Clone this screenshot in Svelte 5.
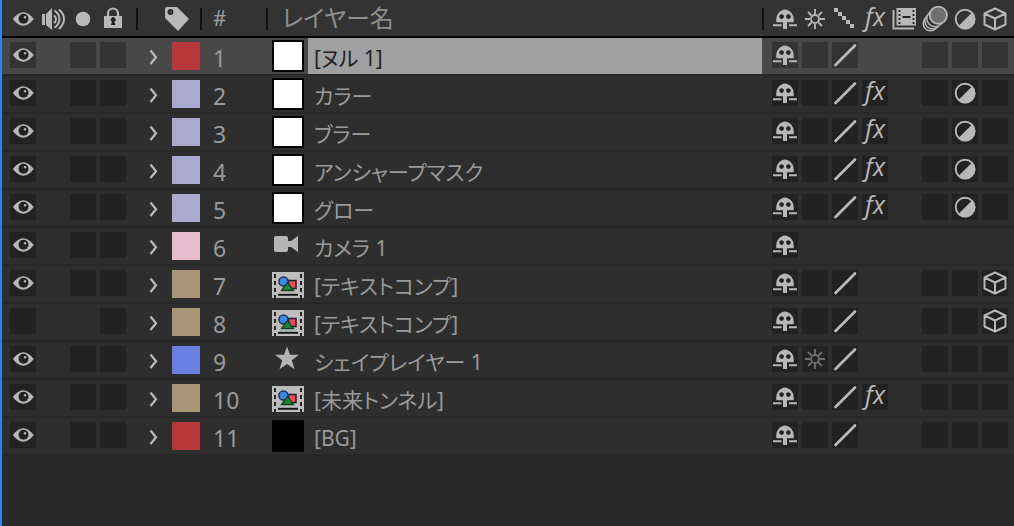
<script>
  const colors = {
    red: '#b83939',
    lavender: '#aaaacf',
    pink: '#e8bdcd',
    sand: '#a89678',
    blue: '#697fe2'
  };

  // av: e = video on, . = empty switch, - = no switch (video, audio, solo, lock)
  // sw: s shy, r / R rasterise off / on, q quality, f effects, a adjustment, c 3D
  const layers = $state([
    { name: '[ヌル 1]', kind: 'white', color: 'red', av: 'e-..', sw: 's.q--...' },
    { name: 'カラー', kind: 'white', color: 'lavender', av: 'e-..', sw: 's.qf-.a.' },
    { name: 'ブラー', kind: 'white', color: 'lavender', av: 'e-..', sw: 's.qf-.a.' },
    { name: 'アンシャープマスク', kind: 'white', color: 'lavender', av: 'e-..', sw: 's.qf-.a.' },
    { name: 'グロー', kind: 'white', color: 'lavender', av: 'e-..', sw: 's.qf-.a.' },
    { name: 'カメラ 1', kind: 'camera', color: 'pink', av: 'e-..', sw: 's-------' },
    { name: '[テキストコンプ]', kind: 'comp', color: 'sand', av: 'e-..', sw: 's.q--..c' },
    { name: '[テキストコンプ]', kind: 'comp', color: 'sand', av: '.--.', sw: 's.q--..c' },
    { name: 'シェイプレイヤー 1', kind: 'star', color: 'blue', av: 'e-..', sw: 'srq--...' },
    { name: '[未来トンネル]', kind: 'comp', color: 'sand', av: 'e-..', sw: 's.qf-...' },
    { name: '[BG]', kind: 'black', color: 'red', av: 'e-..', sw: 's.q--...' }
  ]);
  const avNames = ['ビデオ', 'オーディオ', 'ソロ', 'ロック'];
  const swNames = ['シャイ', 'コラップス', '画質', 'エフェクト', 'フレームブレンド', 'モーションブラー', '調整レイヤー', '3Dレイヤー'];
  const headSwitches = ['s', 'R', 'steps', 'f', 'film', 'blur', 'a', 'c'];
  let selected = $state(0);
</script>

{#snippet icon(name)}
  {#if name === 'f'}
    <span class="fx">fx</span>
  {:else}
    <svg class="icon" class:dim={name === 'r'} viewBox="0 0 26 26" aria-hidden="true">
      {#if name === 'e'}
        <path d="M2.800 13Q13.200-.5 23.800 13Q13.200 26.500 2.800 13Z" fill="currentColor" />
        <circle cx="13.500" cy="12.800" r="5" fill="#222" />
        <circle cx="15" cy="11.300" r="1.200" fill="currentColor" />
      {:else if name === 'speaker'}
        <path d="M2 8h3v11H2zM6 8l6-6v22l-6-5z" fill="currentColor" />
        <path d="M14 9.500Q18 13 14 17M14.500 4.500Q19.500 8 19.500 13T14.500 21.800M19 3.500Q24 8 24 13T19 23" fill="none" stroke="currentColor" stroke-width="2" />
      {:else if name === 'solo'}
        <circle cx="13" cy="13" r="7.300" fill="currentColor" />
      {:else if name === 'lock'}
        <path d="M8 11V7.500a5 5 0 0 1 10 0V11" fill="none" stroke="currentColor" stroke-width="2.200" />
        <path d="M4 10h18v12H4z" fill="currentColor" />
        <path d="M11 19l1-3.200a2.400 2.400 0 1 1 2.400 0l1 3.200z" fill="#222" />
      {:else if name === 's'}
        <path d="M4.500 16.300Q3.500 10.500 6.500 7T13 3.500t6.500 3.500 2 9.300z" fill="currentColor" />
        <circle cx="9.600" cy="10.600" r="2.300" fill="#222" />
        <circle cx="16.400" cy="10.600" r="2.300" fill="#222" />
        <path d="M11 15h4v8h-4zM1 18.300h8.500v2H1zM17 18.300h8v2h-8z" fill="currentColor" />
      {:else if name === 'R' || name === 'r'}
        <circle cx="13" cy="13" r="4" fill="none" stroke="currentColor" stroke-width="1.800" />
        <path d="M13 3v5M13 18v5M3 13h5M18 13h5M6 6l3.500 3.500M16.500 16.500 20 20M20 6l-3.500 3.500M9.500 16.500 6 20" fill="none" stroke="currentColor" stroke-width="1.800" />
      {:else if name === 'q'}
        <path d="M3.500 23 23 3.500" stroke="currentColor" stroke-width="2.800" stroke-linecap="round" />
      {:else if name === 'steps'}
        <path d="M2 2h4v4H2zM6 6h4v4H6zM10 10h4v4h-4zM14 14h4v4h-4zM18 18h4v4h-4z" fill="currentColor" />
      {:else if name === 'film'}
        <path d="M1.500 4v18.500H22" fill="none" stroke="currentColor" stroke-width="2" />
        <path d="M4.500 2H24v17.500H4.500z" fill="currentColor" />
        <path d="M7.500 4v14M21.500 4v14" stroke="#222" stroke-width="1.800" stroke-dasharray="2 2" />
        <path d="M10.500 11h8" stroke="#222" stroke-width="2" />
      {:else if name === 'blur'}
        <g fill="#333" stroke="currentColor" stroke-width="1.500">
          <circle cx="8.500" cy="17.500" r="7.300" />
          <circle cx="10.500" cy="15.300" r="7.700" />
          <circle cx="13" cy="12.500" r="8.200" />
          <circle cx="16.300" cy="9.300" r="8.600" fill="#707070" stroke-width="1.800" />
        </g>
      {:else if name === 'a'}
        <circle cx="13" cy="13" r="9.300" fill="none" stroke="currentColor" stroke-width="1.900" />
        <path d="M20.500 6A10 10 0 0 1 6 20.500z" fill="currentColor" />
      {:else if name === 'c'}
        <path d="M13 2.500 23.500 7.500v11L13 23.500 2.500 18.500v-11zM2.500 7.500 13 12.500l10.500-5M13 12.500v11" fill="none" stroke="currentColor" stroke-width="2" stroke-linejoin="round" />
      {/if}
    </svg>
  {/if}
{/snippet}

{#snippet source(kind)}
  {#if kind === 'white' || kind === 'black'}
    <span class="solid {kind}"></span>
  {:else}
    <svg class="source" viewBox="0 0 32 32" aria-hidden="true">
      {#if kind === 'camera'}
        <rect x="2" y="8" width="14" height="16" rx="2" fill="#b4b4b4" />
        <path d="M15 13h4l7-5v16l-7-5h-4z" fill="#b4b4b4" />
      {:else if kind === 'star'}
        <path d="M15 4.500l3 8.200 9 .1-7.200 5.500 2.700 8.900-7.500-5.200-7.500 5.200 2.700-8.900L3 12.800l9-.1z" fill="#b4b4b4" />
      {:else}
        <path d="M0 6h32v26H0z" fill="#bdbdbd" />
        <path d="M3 8v24M29 8v24" stroke="#242424" stroke-width="2" stroke-dasharray="4 3" />
        <path d="M6 28.800h20" stroke="#191919" stroke-width="2" />
        <path d="M16.500 14.500h7.500v8h-7.500z" fill="#f04858" stroke="#202020" stroke-width="1.500" />
        <circle cx="11.500" cy="15.500" r="4.600" fill="#3c88e8" stroke="#1c3454" stroke-width="1.500" />
        <path d="M15.500 16.500 21.500 24.500h-12z" fill="#168b35" stroke="#173d1f" stroke-width="1.300" />
      {/if}
    </svg>
  {/if}
{/snippet}

<main>
  <table>
    <colgroup>
      <col class="col-av" /><col class="col-label" /><col class="col-num" /><col /><col class="col-switch" />
    </colgroup>
    <thead>
      <tr>
        <th>
          <div class="cell av">
            {#each ['e', 'speaker', 'solo', 'lock'] as name}<span class="slot">{@render icon(name)}</span>{/each}
          </div>
        </th>
        <th>
          <div class="cell tag">
            <i class="divider"></i>
            <svg viewBox="0 0 26 26" aria-hidden="true">
              <path d="M1 3Q1 1 3 1h10l12 12-11 12L1 12z" fill="currentColor" />
              <circle cx="6.500" cy="6" r="2.900" fill="#2a2a2a" />
              <circle cx="6.500" cy="6" r="1.600" fill="#444" />
            </svg>
          </div>
        </th>
        <th><div class="cell number"><i class="divider"></i>#</div></th>
        <th><div class="cell title"><i class="divider"></i>レイヤー名</div></th>
        <th>
          <div class="cell switches">
            <i class="divider"></i>
            {#each headSwitches as name}<span class="slot">{@render icon(name)}</span>{/each}
          </div>
        </th>
      </tr>
    </thead>
    <tbody>
      {#each layers as layer, i}
        <tr class:selected={selected === i} onclick={() => (selected = i)}>
          <td>
            <div class="cell av">
              {#each layer.av as state, n}
                {#if state === '-'}
                  <span class="slot"></span>
                {:else}
                  <button class="slot box" aria-label={avNames[n]}>{@render icon(state)}</button>
                {/if}
              {/each}
            </div>
          </td>
          <td>
            <div class="cell label">
              <button class="slot" aria-label="展開">
                <svg class="icon" viewBox="0 0 26 26" aria-hidden="true">
                  <path d="M10.500 8.500l5.500 6.700-5.500 6.700" fill="none" stroke="currentColor" stroke-width="2.300" />
                </svg>
              </button>
              <button class="swatch" aria-label="ラベル" style:background={colors[layer.color]}></button>
            </div>
          </td>
          <td><div class="cell number">{i + 1}</div></td>
          <td>
            <div class="cell name">
              {@render source(layer.kind)}
              <span class="text">{layer.name}</span>
            </div>
          </td>
          <td>
            <div class="cell switches">
              {#each layer.sw as state, n}
                {#if state === '-'}
                  <span class="slot"></span>
                {:else}
                  <button class="slot box" aria-label={swNames[n]}>{@render icon(state)}</button>
                {/if}
              {/each}
            </div>
          </td>
        </tr>
      {/each}
    </tbody>
  </table>
</main>

<style>
  :global(body) {
    margin: 0;
    background: #282828;
  }
  main {
    box-sizing: border-box;
    min-height: 100vh;
    border-left: 2px solid #2d86ea;
    background: #282828;
    color: #b8b8b8;
    font-family: "Noto Sans", "Noto Sans CJK JP", sans-serif;
    font-size: 21px;
    line-height: 36px;
    font-feature-settings: "palt";
  }
  table {
    width: 100%;
    table-layout: fixed;
    border-spacing: 0;
  }
  .col-av { width: 134px; }
  .col-label { width: 64px; }
  .col-num { width: 66px; }
  .col-switch { width: 252px; }
  th, td {
    padding: 0;
    text-align: left;
    font-weight: 400;
  }
  th {
    background: #333;
    border-bottom: 2px solid #000;
  }
  td {
    background: #2e2e2e;
    border-bottom: 2px solid #272727;
  }
  .selected td { background: #484848; }
  .cell {
    position: relative;
    display: flex;
    box-sizing: border-box;
    height: 36px;
  }
  .av, .switches {
    gap: 4px;
    padding-top: 4px;
  }
  .av { padding-left: 8px; }
  .switches { padding-left: 10px; }
  th .av, th .switches { padding-top: 6px; }
  .divider {
    position: absolute;
    left: 0;
    top: 8px;
    width: 2px;
    height: 22px;
    background: #111;
  }
  button {
    padding: 0;
    border: 0;
    background: none;
    color: inherit;
    font: inherit;
  }
  .slot {
    display: flex;
    flex: none;
    justify-content: center;
    width: 26px;
    height: 26px;
  }
  .box { background: #222; }
  .selected .box { background: #333; }
  .icon {
    display: block;
    width: 26px;
    height: 26px;
  }
  .dim { color: #707070; }
  .fx {
    font-family: "Open Sans", "Noto Sans", sans-serif;
    font-size: 25px;
    font-style: italic;
    font-weight: 400;
    line-height: 20px;
  }
  .tag { padding: 6px 0 0 28px; }
  .tag svg {
    width: 26px;
    height: 26px;
  }
  .label {
    gap: 6px;
    padding: 4px 0 0 4px;
  }
  .swatch {
    width: 28px;
    height: 28px;
  }
  .number {
    padding-left: 13px;
    color: #9a9a9a;
  }
  td .number, .text { line-height: 40px; }
  td .number { font-size: 23px; }
  .title {
    padding-left: 16px;
    color: #8e8e8e;
    font-size: 24px;
  }
  .name {
    gap: 4px;
    padding-left: 6px;
    color: #9a9a9a;
  }
  .source, .solid {
    flex: none;
    box-sizing: border-box;
    width: 32px;
    height: 32px;
  }
  .solid {
    margin-top: 2px;
    border: 2px solid #000;
  }
  .white { background: #fff; }
  .black { background: #000; }
  .text {
    flex: 1;
    min-width: 0;
    height: 36px;
    padding-left: 6px;
    white-space: nowrap;
    overflow: hidden;
  }
  .selected .text {
    background: #a0a0a0;
    color: #222;
  }
</style>
